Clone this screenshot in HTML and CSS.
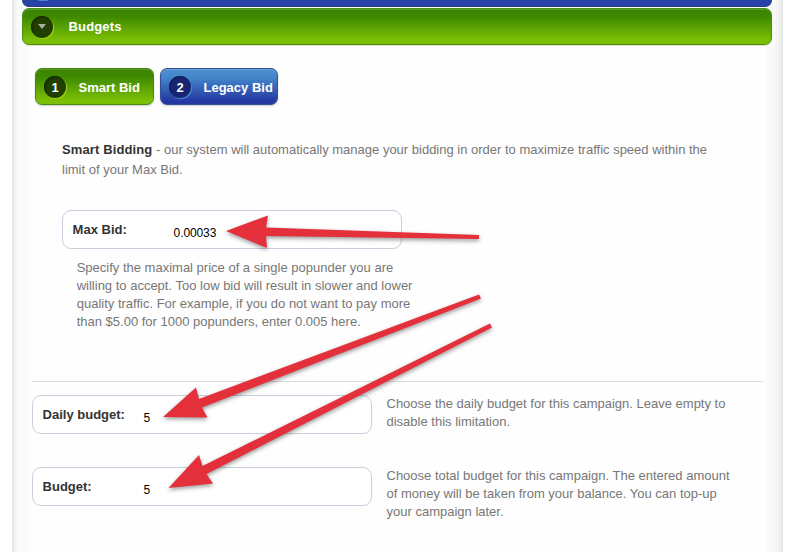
FILE: index.html
```html
<!DOCTYPE html>
<html lang="en">
<head>
<meta charset="utf-8">
<title>Budgets</title>
<link rel="stylesheet" href="styles.css">
</head>
<body>
<main class="panel">
  <div class="previous"><span class="previous-dot"></span></div>
  <header class="section-head">
    <span class="disc"><i class="caret"></i></span>
    <span class="title">Budgets</span>
  </header>
  <nav class="tabs">
    <a class="tab green"><span class="disc">1</span><span class="tab-label">Smart Bid</span></a>
    <a class="tab blue"><span class="disc">2</span><span class="tab-label">Legacy Bid</span></a>
  </nav>
  <section class="bidding">
    <p class="intro"><b>Smart Bidding</b> - our system will automatically manage your bidding in order to maximize traffic speed within the<br>limit of your Max Bid.</p>
    <div class="field"><span class="name">Max Bid:</span><span class="value">0.00033</span></div>
    <p class="help">Specify the maximal price of a single popunder you are<br>willing to accept. Too low bid will result in slower and lower<br>quality traffic. For example, if you do not want to pay more<br>than $5.00 for 1000 popunders, enter 0.005 here.</p>
  </section>
  <section class="budgets">
    <div class="row">
      <div class="field"><span class="name">Daily budget:</span><span class="value">5</span></div>
      <p class="help">Choose the daily budget for this campaign. Leave empty to<br>disable this limitation.</p>
    </div>
    <div class="row">
      <div class="field"><span class="name">Budget:</span><span class="value">5</span></div>
      <p class="help">Choose total budget for this campaign. The entered amount<br>of money will be taken from your balance. You can top-up<br>your campaign later.</p>
    </div>
  </section>
</main>
<svg class="arrows" viewBox="0 0 793 552" width="793" height="552">
  <path d="M226 231L268 215.500L266 227.500L479 235V239L266 236L267 248Z"/>
  <path d="M163 417L196 387.500L199 399L479 294.500L481 298.500L202 407.500L207.500 417.500Z"/>
  <path d="M168.500 488L199 455L202.500 466L490 323.500L492 327.500L206.500 474L213 483.500Z"/>
</svg>
</body>
</html>
```
FILE: styles.css
```css
* { box-sizing: border-box; }
body {
  margin: 0;
  height: 552px;
  overflow: hidden;
  background: #fff;
  font: 13px/18px "Liberation Sans", Arial, sans-serif;
  color: #777;
}
p { margin: 0; white-space: nowrap; }
.panel {
  width: 771px;
  height: 552px;
  margin-left: 12px;
  padding: 0 11px 0 10px;
  background:
    linear-gradient(to right, #e3e5e5, #f1f2f2 3px, #f9fafa 6px, #fbfcfc 16px, #fefefe 17px, transparent 18px),
    linear-gradient(to left, #e5e5e5, #efefef 3px, #f8f8f8 8px, #fbfbfb 17px, #fefefe 18px, transparent 19px),
    #fefefe;
}
.previous {
  height: 7px;
  overflow: hidden;
  background: #2842a7;
  border: 1px solid #283982;
  border-top: 0;
  border-radius: 0 0 7px 7px;
}
.previous-dot {
  display: block;
  width: 12px;
  height: 3px;
  margin: -2px 0 0 14px;
  border-radius: 0 0 8px 8px;
  background: #4a89d0;
}
.section-head {
  display: flex;
  align-items: center;
  height: 37px;
  margin-top: 1px;
  padding-left: 8px;
  border: 1px solid #4a8d14;
  border-radius: 7px;
  background: linear-gradient(#3c8400 5%, #3f8901 22%, #7bc004 90%);
  box-shadow: inset 0 1px #5b9c2c, 0 1px 1px #d9e2d2;
  color: #fff;
  font-weight: bold;
}
.disc {
  flex: none;
  display: flex;
  align-items: center;
  justify-content: center;
  width: 22px;
  height: 22px;
  border-radius: 50%;
  background: #203f00;
  box-shadow: 1px 1px 1px #a4d70f, inset 1px 1px 2px #122700;
}
.tab .disc { padding-top: 2px; }
.caret {
  border: 4px solid transparent;
  border-top: 5px solid #aab1a3;
  border-bottom: 0;
}
.title { margin-left: 15.5px; letter-spacing: .15px; }
.tabs { display: flex; gap: 6px; margin: 23px 0 0 13px; }
.tab {
  display: flex;
  align-items: center;
  height: 37px;
  padding-left: 8px;
  border: 1px solid #47880d;
  border-radius: 7px;
  color: #fff;
  font-weight: bold;
  white-space: nowrap;
}
.green {
  width: 119px;
  background: linear-gradient(#3e8600 5%, #3f8901 22%, #7bc004 90%);
  box-shadow: inset 0 1px #559722, 0 1px 2px #ccc;
}
.blue {
  width: 118px;
  border-color: #344f99;
  background: linear-gradient(#4c91cf, #4385ca 25%, #2437a0 92%);
  box-shadow: inset 0 1px #69a5d7, 0 1px 2px #ccc;
}
.blue .disc {
  background: #182672;
  box-shadow: 1px 1px 1px #4a8cdc, inset 1px 1px 2px #101a55;
}
.tab-label { margin-left: 12.5px; padding-top: 2px; }
.bidding { height: 276px; padding: 35px 0 0 40px; }
.intro { line-height: 20px; }
.intro b { color: #333; letter-spacing: .12px; }
.bidding .field { margin-top: 30px; }
.bidding .help { margin: 10px 0 0 14.7px; }
.field {
  flex: none;
  display: flex;
  width: 340px;
  height: 39px;
  padding: 10px 0 0 9.6px;
  border: 1px solid #c9cfdd;
  border-radius: 9px;
  background: #fff;
}
.name { width: 101px; color: #333; font-weight: bold; }
.value { padding-top: 3px; color: #000; font-size: 12px; letter-spacing: -.1px; }
.budgets {
  width: 731px;
  margin-left: 10px;
  padding-top: 13px;
  border-top: 1px solid #ddd;
}
.row { display: flex; gap: 14.5px; height: 72px; }
.arrows {
  position: absolute;
  left: 0;
  top: 0;
  fill: #e4303b;
  filter: drop-shadow(0 2px 2px rgba(0, 0, 0, .4));
}
```
